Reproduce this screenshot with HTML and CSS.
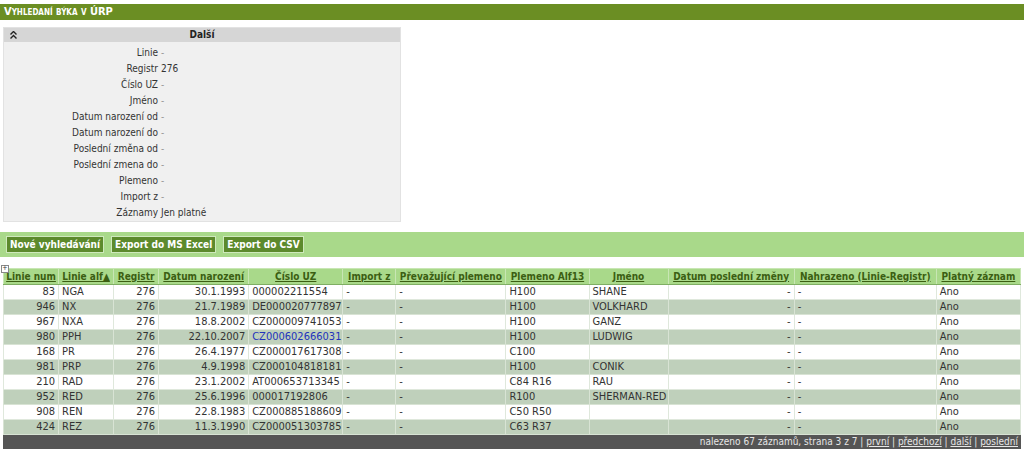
FILE: index.html
```html
<!DOCTYPE html>
<html lang="cs">
<head>
<meta charset="utf-8">
<title>Vyhledaní býka v ÚRP</title>
<link rel="stylesheet" href="styles.css">
</head>
<body>
<div class="titlebar">Vyhledaní býka v ÚRP</div>

<div class="filter">
  <div class="filter-head">
    <span class="collapse">
      <svg width="7" height="8" viewBox="0 0 7 8"><path d="M0.5 3.5 L3.5 0.5 L6.5 3.5 M0.5 7.5 L3.5 4.5 L6.5 7.5" fill="none" stroke="#222" stroke-width="1.4"/></svg>
    </span>
    <span>Další</span>
  </div>
  <div class="filter-body">
    <span class="lbl">Linie</span><span class="val dash">-</span>
    <span class="lbl">Registr</span><span class="val">276</span>
    <span class="lbl">Číslo UZ</span><span class="val dash">-</span>
    <span class="lbl">Jméno</span><span class="val dash">-</span>
    <span class="lbl">Datum narození od</span><span class="val dash">-</span>
    <span class="lbl">Datum narození do</span><span class="val dash">-</span>
    <span class="lbl">Poslední změna od</span><span class="val dash">-</span>
    <span class="lbl">Poslední zmena do</span><span class="val dash">-</span>
    <span class="lbl">Plemeno</span><span class="val dash">-</span>
    <span class="lbl">Import z</span><span class="val dash">-</span>
    <span class="lbl">Záznamy</span><span class="val">Jen platné</span>
  </div>
</div>

<div class="actions">
  <button class="btn">Nové vyhledávání</button>
  <button class="btn">Export do MS Excel</button>
  <button class="btn">Export do CSV</button>
</div>

<div class="grid-wrap">
  <span class="corner">+</span>
  <table class="grid">
    <thead>
      <tr>
        <th class="c1"><a>Linie num</a></th>
        <th class="c2"><a>Linie alf▲</a></th>
        <th class="c3"><a>Registr</a></th>
        <th class="c4"><a>Datum narození</a></th>
        <th class="c5"><a>Číslo UZ</a></th>
        <th class="c6"><a>Import z</a></th>
        <th class="c7"><a>Převažující plemeno</a></th>
        <th class="c8"><a>Plemeno Alf13</a></th>
        <th class="c9"><a>Jméno</a></th>
        <th class="c10"><a>Datum poslední změny</a></th>
        <th class="c11"><a>Nahrazeno (Linie-Registr)</a></th>
        <th class="c12"><a>Platný záznam</a></th>
      </tr>
    </thead>
    <tbody>
      <tr><td class="r">83</td><td>NGA</td><td class="r">276</td><td class="r">30.1.1993</td><td>000002211554</td><td>-</td><td>-</td><td>H100</td><td>SHANE</td><td class="r">-</td><td>-</td><td>Ano</td></tr>
      <tr><td class="r">946</td><td>NX</td><td class="r">276</td><td class="r">21.7.1989</td><td>DE000020777897</td><td>-</td><td>-</td><td>H100</td><td>VOLKHARD</td><td class="r">-</td><td>-</td><td>Ano</td></tr>
      <tr><td class="r">967</td><td>NXA</td><td class="r">276</td><td class="r">18.8.2002</td><td>CZ000009741053</td><td>-</td><td>-</td><td>H100</td><td>GANZ</td><td class="r">-</td><td>-</td><td>Ano</td></tr>
      <tr><td class="r">980</td><td>PPH</td><td class="r">276</td><td class="r">22.10.2007</td><td><a class="link">CZ000602666031</a></td><td>-</td><td>-</td><td>H100</td><td>LUDWIG</td><td class="r">-</td><td>-</td><td>Ano</td></tr>
      <tr><td class="r">168</td><td>PR</td><td class="r">276</td><td class="r">26.4.1977</td><td>CZ000017617308</td><td>-</td><td>-</td><td>C100</td><td></td><td class="r">-</td><td>-</td><td>Ano</td></tr>
      <tr><td class="r">981</td><td>PRP</td><td class="r">276</td><td class="r">4.9.1998</td><td>CZ000104818181</td><td>-</td><td>-</td><td>H100</td><td>CONIK</td><td class="r">-</td><td>-</td><td>Ano</td></tr>
      <tr><td class="r">210</td><td>RAD</td><td class="r">276</td><td class="r">23.1.2002</td><td>AT000653713345</td><td>-</td><td>-</td><td>C84 R16</td><td>RAU</td><td class="r">-</td><td>-</td><td>Ano</td></tr>
      <tr><td class="r">952</td><td>RED</td><td class="r">276</td><td class="r">25.6.1996</td><td>000017192806</td><td>-</td><td>-</td><td>R100</td><td>SHERMAN-RED</td><td class="r">-</td><td>-</td><td>Ano</td></tr>
      <tr><td class="r">908</td><td>REN</td><td class="r">276</td><td class="r">22.8.1983</td><td>CZ000885188609</td><td>-</td><td>-</td><td>C50 R50</td><td></td><td class="r">-</td><td>-</td><td>Ano</td></tr>
      <tr><td class="r">424</td><td>REZ</td><td class="r">276</td><td class="r">11.3.1990</td><td>CZ000051303785</td><td>-</td><td>-</td><td>C63 R37</td><td></td><td class="r">-</td><td>-</td><td>Ano</td></tr>
    </tbody>
    <tfoot>
      <tr>
        <td colspan="12" class="pager">nalezeno 67 záznamů, strana 3 z 7 | <a>první</a> | <a>předchozí</a> | <a>další</a> | <a>poslední</a></td>
      </tr>
    </tfoot>
  </table>
</div>
</body>
</html>
```

FILE: styles.css
```css
html, body {
  margin: 0;
  padding: 0;
  background: #ffffff;
}
body {
  font-family: "DejaVu Sans Condensed", "DejaVu Sans", "Liberation Sans", sans-serif;
  font-size: 11px;
  color: #333333;
}

.titlebar {
  margin-top: 4px;
  height: 16px;
  line-height: 16px;
  background: #6b8e23;
  color: #ffffff;
  font-weight: bold;
  font-variant: small-caps;
  padding-left: 4px;
  font-size: 11px;
}

.filter {
  margin: 7px 0 0 3px;
  width: 396px;
  background: #f0f0f0;
  border: 1px solid #e2e2e2;
}
.filter-head {
  position: relative;
  height: 14px;
  line-height: 14px;
  background: #d6d6d6;
  text-align: center;
  font-weight: bold;
  font-size: 10px;
  color: #222;
}
.collapse {
  position: absolute;
  left: 6px;
  top: 3px;
  line-height: 0;
}
.filter-body {
  display: grid;
  grid-template-columns: 154px 1fr;
  column-gap: 3px;
  padding: 3px 0 0 0;
  line-height: 16px;
  font-size: 10px;
}
.lbl {
  text-align: right;
  color: #333;
}
.val {
  color: #333;
}
.val.dash {
  color: #999;
}

.actions {
  margin-top: 10px;
  height: 25px;
  background: #a9d98a;
  display: flex;
  align-items: center;
  gap: 7px;
  padding-left: 6px;
  box-sizing: border-box;
}
.btn {
  font-family: inherit;
  font-size: 10px;
  font-weight: bold;
  color: #ffffff;
  background: #5c8a2c;
  border: 1px solid #cfe9bd;
  height: 17px;
  line-height: 14px;
  padding: 0 3px;
  margin: 0;
}

.grid-wrap {
  position: relative;
  margin: 11px 0 0 3px;
  width: 1018px;
}
.corner {
  position: absolute;
  left: -2px;
  top: -3px;
  width: 6px;
  height: 6px;
  line-height: 5px;
  font-size: 7px;
  text-align: center;
  background: #fff;
  border: 1px solid #888;
  color: #333;
}
.grid {
  border-collapse: collapse;
  width: 1018px;
  border: 1px solid #555555;
  table-layout: fixed;
}
.grid th,
.grid td {
  box-sizing: border-box;
}
.grid th {
  background: #a9d98a;
  height: 16px;
  line-height: 14px;
  padding: 0 1px;
  font-size: 10px;
  font-weight: bold;
  text-align: center;
  white-space: nowrap;
  overflow: hidden;
  border: 1px solid #c8e6b4;
  border-bottom: 1px solid #7fae63;
}
.grid th a {
  color: #3b5e12;
  text-decoration: underline;
}
.grid td {
  height: 15px;
  line-height: 14px;
  padding: 0 3px;
  white-space: nowrap;
  overflow: hidden;
  border: 1px solid #dfe8dc;
  color: #333;
}
.grid tbody tr:nth-child(even) td {
  background: #bfd0bb;
  border-color: #d8e3d4;
}
.grid td.r {
  text-align: right;
}
.link {
  color: #2233bb;
}
.grid td.pager {
  background: #555555;
  color: #e6e6e6;
  text-align: right;
  height: 13px;
  line-height: 13px;
  padding: 0 2px;
  font-size: 10px;
  border: 1px solid #555555;
}
.pager a {
  color: #e6e6e6;
  text-decoration: underline;
}

.c1 { width: 55px; }
.c2 { width: 55px; }
.c3 { width: 45px; }
.c4 { width: 90px; }
.c5 { width: 94px; }
.c6 { width: 53px; }
.c7 { width: 110px; }
.c8 { width: 83px; }
.c9 { width: 79px; }
.c10 { width: 126px; }
.c11 { width: 142px; }
.c12 { width: 84px; }
```
